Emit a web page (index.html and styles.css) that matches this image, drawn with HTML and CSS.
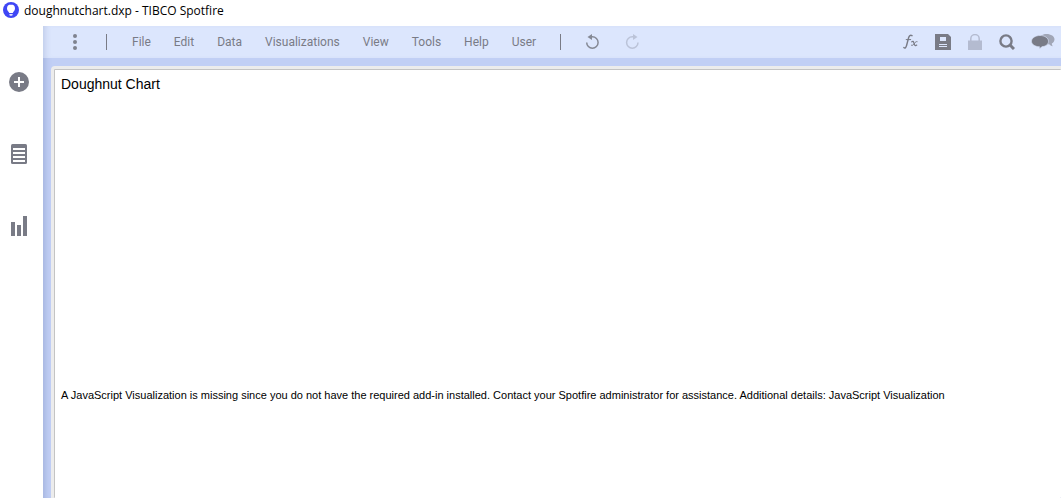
FILE: index.html
```html
<!DOCTYPE html>
<html lang="en">
<head>
<meta charset="UTF-8">
<meta name="viewport" content="width=device-width, initial-scale=1.0">
<title>doughnutchart.dxp - TIBCO Spotfire</title>
<link rel="stylesheet" href="styles.css">
</head>
<body>
<header class="titlebar">
    <svg class="logo" width="16" height="16" viewBox="0 0 16 16">
        <circle cx="8" cy="8" r="8" fill="#3f46f5"/>
        <path d="M8 2.5a4 4 0 0 0-4 4c0 1.6.9 2.6 1.7 3.6.2.3.4.5.5.9h3.6c.1-.4.3-.6.5-.9.8-1 1.7-2 1.7-3.6a4 4 0 0 0-4-4z" fill="#fff"/>
        <path d="M6.400 12h3.200v1a1 1 0 0 1-1 .8H7.400a1 1 0 0 1-1-.8z" fill="#dfe2ff"/>
    </svg>
    <span>doughnutchart.dxp - TIBCO Spotfire</span>
</header>

<div class="app">
    <aside class="sidebar">
        <button type="button" aria-label="Files and data">
            <svg width="20" height="20" viewBox="0 0 20 20">
                <circle cx="10" cy="10" r="10" fill="#797b86"/>
                <path d="M10 5v10M5 10h10" stroke="#fff" stroke-width="2"/>
            </svg>
        </button>
        <button type="button" aria-label="Data in analysis">
            <svg width="20" height="20" viewBox="0 0 20 20">
                <rect x="2" y="0" width="16" height="20" rx="1.5" fill="#797b86"/>
                <path d="M4 5h12M4 9h12M4 13h12M4 17h12" stroke="#fff" stroke-width="2"/>
            </svg>
        </button>
        <button type="button" aria-label="Visualization types">
            <svg width="20" height="20" viewBox="0 0 20 20">
                <path d="M2 6h4v14H2zM8 9h4v11H8zM14 0h4v20h-4z" fill="#797b86"/>
            </svg>
        </button>
    </aside>

    <main class="workspace">
        <div class="toolbar">
            <button type="button" aria-label="More">
                <svg width="14" height="16" viewBox="0 0 14 16" fill="#7f838f">
                    <circle cx="7" cy="2" r="2"/>
                    <circle cx="7" cy="8" r="2"/>
                    <circle cx="7" cy="14" r="2"/>
                </svg>
            </button>
            <span class="divider"></span>
            <nav class="menu">
                <button type="button">File</button>
                <button type="button">Edit</button>
                <button type="button">Data</button>
                <button type="button">Visualizations</button>
                <button type="button">View</button>
                <button type="button">Tools</button>
                <button type="button">Help</button>
                <button type="button">User</button>
            </nav>
            <span class="divider"></span>
            <button type="button" aria-label="Undo">
                <svg width="16" height="16" viewBox="0 0 16 16">
                    <path d="M1.700 8.500a5.700 5.700 0 1 0 5.700-5.700H6" fill="none" stroke="#858995" stroke-width="1.500"/>
                    <path d="M2.500 3L7 0v6z" fill="#858995"/>
                </svg>
            </button>
            <button type="button" aria-label="Redo" disabled>
                <svg width="16" height="16" viewBox="0 0 16 16">
                    <path d="M13.700 8.500A5.700 5.700 0 1 1 8 2.800h1.400" transform="translate(-.7)" fill="none" stroke="#bbc3d8" stroke-width="1.500"/>
                    <path d="M12.500 3L8 0v6z" fill="#bbc3d8"/>
                </svg>
            </button>

            <div class="tools">
                <button type="button" aria-label="Expression">
                    <svg width="16" height="16" viewBox="0 0 16 16" fill="none" stroke="#797b86" stroke-linecap="round">
                        <path d="M.8 13.600c1.100 1 2.200.2 2.700-1.900L5.600 3.800C6.100 1.700 7.500.7 9 1.700" stroke-width="1.400"/>
                        <path d="M3.200 5.600h4.500" stroke-width="1"/>
                        <path d="M8.800 7.800c1-.8 1.600-.4 2 .8l.7 2c.4 1.200 1.200 1.400 2.200.5" stroke-width="1.300"/>
                        <path d="M14.100 7.600c-1-.3-1.700.5-2.700 1.900s-1.800 2.200-2.900 1.800" stroke-width="1"/>
                    </svg>
                </button>
                <button type="button" aria-label="Save">
                    <svg width="16" height="16" viewBox="0 0 16 16">
                        <path d="M0 0h13l3 3v13H0z" fill="#797b86"/>
                        <path d="M5 3h6v4H5zM4 10h8v1H4zM4 12h8v1H4z" fill="#dce6fd"/>
                    </svg>
                </button>
                <button type="button" aria-label="Locked" disabled>
                    <svg width="16" height="16" viewBox="0 0 16 16">
                        <path d="M3.800 7V4.800a4.200 4.200 0 0 1 8.400 0V7" fill="none" stroke="#b4bbd0" stroke-width="1.500"/>
                        <path d="M1 6.500h14V16H1z" fill="#b4bbd0"/>
                    </svg>
                </button>
                <button type="button" aria-label="Find">
                    <svg width="16" height="16" viewBox="0 0 16 16" fill="none" stroke="#797b86">
                        <circle cx="7" cy="7" r="5.600" stroke-width="2.400"/>
                        <path d="M11 11l4 4" stroke-width="3"/>
                    </svg>
                </button>
                <button type="button" aria-label="Collaboration">
                    <svg width="24" height="16" viewBox="0 0 24 16">
                        <path d="M15.500 0c4.500 0 8 2.300 8 5.300 0 1.800-1 3.200-2.700 4.200.1 1.300.5 2 1 2.800-1.500-.3-2.700-1-3.500-2-6 .5-10-1.700-10-5C8.300 2.300 11 0 15.500 0z" fill="#a1a6b6"/>
                        <path d="M9 1.500c4.700 0 8.500 2.500 8.500 5.700s-3 5.300-6.700 5.500c-.7 1-1.700 1.700-2.800 2.100.3-.7.5-1.300.5-2.100C4 12.700.5 10.300.5 7.200S4.300 1.500 9 1.500z" fill="#797b86" stroke="#dce6fd" stroke-width=".6"/>
                    </svg>
                </button>
            </div>
        </div>

        <div class="page">
            <section class="visual">
                <h1>Doughnut Chart</h1>
                <p>A JavaScript Visualization is missing since you do not have the required add-in installed. Contact your Spotfire administrator for assistance. Additional details: JavaScript Visualization</p>
            </section>
        </div>
    </main>
</div>
</body>
</html>
```

FILE: styles.css
```css
* {
    box-sizing: border-box;
}
body {
    margin: 0;
    height: 100vh;
    display: flex;
    flex-direction: column;
    overflow: hidden;
    background-color: #fff;
    font-family: Roboto, "Liberation Sans", sans-serif;
}
button {
    padding: 0;
    border: none;
    background: none;
    font: inherit;
    color: inherit;
    cursor: pointer;
}
button:disabled {
    cursor: default;
}
svg {
    display: block;
}

.titlebar {
    display: flex;
    gap: 5px;
    padding: 2px 3px 6px;
    font-family: "Open Sans", "Noto Sans", sans-serif;
    font-size: 12px;
    line-height: 18px;
    color: #000;
}

.app {
    display: flex;
    flex: 1;
    min-height: 0;
}

.sidebar {
    display: flex;
    flex-direction: column;
    gap: 52px;
    width: 43px;
    flex-shrink: 0;
    padding: 46px 9px;
}

.workspace {
    display: flex;
    flex-direction: column;
    flex: 1;
    min-width: 0;
    background-color: #c1cff5;
    box-shadow: inset 6px 0 6px -4px rgba(70, 90, 150, 0.25);
}

.toolbar {
    display: flex;
    align-items: center;
    gap: 24px;
    height: 32px;
    flex-shrink: 0;
    padding: 0 6px 0 25px;
    background-color: #dce6fd;
    box-shadow: inset 6px 0 6px -4px rgba(70, 90, 150, 0.2);
    font-size: 12px;
    line-height: 16px;
    color: #797b86;
}
.divider {
    width: 1px;
    height: 16px;
    background-color: #797b86;
}
.menu {
    display: flex;
    gap: 23px;
    margin-left: 1px;
}
.tools {
    display: flex;
    align-items: center;
    gap: 16px;
    margin-left: auto;
}

.page {
    flex: 1;
    min-height: 0;
    padding: 11px 0 0 11px;
}
.visual {
    height: 100%;
    padding: 6px;
    border-top: 1px solid #c4c4c4;
    border-left: 1px solid #c4c4c4;
    background-color: #fff;
    outline: 3px solid #ececec;
    border-radius: 1px;
    font-family: "Liberation Sans", Arial, sans-serif;
    color: #000;
}
.visual h1 {
    margin: 0;
    font-size: 14px;
    font-weight: normal;
    line-height: 16px;
}
.visual p {
    margin: 296px 0 0;
    font-size: 11px;
    line-height: 14px;
}
```
